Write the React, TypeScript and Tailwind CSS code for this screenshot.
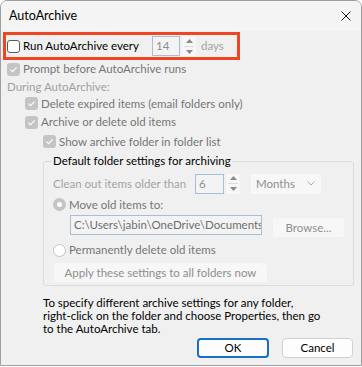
import { FC } from "react";

const font = { fontFamily: 'Lato, "Liberation Sans", sans-serif' };

const Check: FC<{ checked?: boolean; disabled?: boolean }> = ({ checked, disabled }) =>
    checked ? (
        <div className={`shrink-0 w-[13px] h-[13px] rounded-[3px] flex items-center justify-center ${disabled ? "bg-[#c4c4c4]" : "bg-[#005fb8]"}`}>
            <svg width="9" height="9" viewBox="0 0 9 9">
                <path d="M1.5 4.6 L3.6 6.6 L7.6 2.4" stroke="#fff" strokeWidth="1.1" fill="none" />
            </svg>
        </div>
    ) : (
        <div className="shrink-0 w-[13px] h-[13px] rounded-[3px] border border-[#5a5a5a] bg-white" />
    );

const Radio: FC<{ selected?: boolean }> = ({ selected }) =>
    selected ? (
        <div className="shrink-0 w-[13px] h-[13px] rounded-full bg-[#c4c4c4] flex items-center justify-center">
            <div className="w-[5px] h-[5px] rounded-full bg-white" />
        </div>
    ) : (
        <div className="shrink-0 w-[13px] h-[13px] rounded-full border border-[#c2c2c2] bg-white" />
    );

const Spin: FC<{ value: string; w: string }> = ({ value, w }) => (
    <div className="flex items-center shrink-0">
        <div className={`${w} h-[20px] border border-[#a9bdd4] bg-[#f3f3f3] flex items-center pl-[3px] text-[#8e8e8e]`}>{value}</div>
        <div className="ml-[2px] w-[14px] h-[20px] bg-[#f7f7f7] flex flex-col items-center justify-center gap-[3px]">
            <svg width="7" height="4" viewBox="0 0 7 4"><path d="M0 4 L3.5 0 L7 4Z" fill="#8a8a8a" /></svg>
            <div className="w-[10px] h-px bg-[#dcdcdc]" />
            <svg width="7" height="4" viewBox="0 0 7 4"><path d="M0 0 L3.5 4 L7 0Z" fill="#8a8a8a" /></svg>
        </div>
    </div>
);

export const App: FC = () => {
    return (
        <div style={font} className="w-[362px] h-[367px] bg-white text-[11.5px] leading-[16px] whitespace-nowrap">
            <div className="w-[362px] h-[366px] rounded-t-[7px] border border-[#9f9f9f] bg-[#f0f0f0] overflow-hidden flex flex-col">
                <div className="h-[30px] bg-[#f4f4f4] flex items-center justify-between pl-[8px] pr-[10px] shrink-0">
                    <span className="text-[12.5px] text-black">AutoArchive</span>
                    <svg width="10" height="10" viewBox="0 0 10 10">
                        <path d="M0.5 0.5 L9.5 9.5 M9.5 0.5 L0.5 9.5" stroke="#1a1a1a" strokeWidth="1" />
                    </svg>
                </div>

                <div className="ml-[2px] mt-[1px] w-[237px] h-[28px] border-[3px] border-[#ef4523] flex items-center pl-[1px] shrink-0">
                    <Check />
                    <span className="ml-[3px] w-[114px] shrink-0 text-black">Run AutoArchive every</span>
                    <div className="ml-[15px]"><Spin value="14" w="w-[28px]" /></div>
                    <span className="ml-[5px] text-[#a3a3a3]">days</span>
                </div>

                <div className="h-[18px] flex items-center pl-[6px] shrink-0">
                    <Check checked disabled />
                    <span className="ml-[3px] text-[#767676]">Prompt before AutoArchive runs</span>
                </div>
                <div className="h-[17px] flex items-center pl-[6px] text-[#a0a0a0] shrink-0">During AutoArchive:</div>
                <div className="h-[17px] flex items-center pl-[24px] shrink-0">
                    <Check checked disabled />
                    <span className="ml-[3px] text-[#767676]">Delete expired items (email folders only)</span>
                </div>
                <div className="h-[20px] flex items-center pl-[24px] shrink-0">
                    <Check checked disabled />
                    <span className="ml-[3px] text-[#767676]">Archive or delete old items</span>
                </div>
                <div className="h-[19px] flex items-center pl-[42px] shrink-0">
                    <Check checked disabled />
                    <span className="ml-[3px] text-[#767676]">Show archive folder in folder list</span>
                </div>

                <fieldset className="shrink-0 mt-[2px] ml-[42px] w-[311px] border border-[#dcdcdc] rounded-[3px] pl-[9px] pr-[8px] pb-[3px]">
                    <legend className="-ml-[1px] px-[1px] text-black">Default folder settings for archiving</legend>
                    <div className="mt-[4px] h-[21px] flex items-center">
                        <span className="w-[135px] shrink-0 text-[#a3a3a3]">Clean out items older than</span>
                        <div className="ml-[7px]"><Spin value="6" w="w-[29px]" /></div>
                        <div className="ml-[11px] w-[70px] h-[20px] bg-[#f7f7f7] flex items-center justify-between pl-[5px] pr-[6px] text-[#8e8e8e]">
                            <span>Months</span>
                            <svg width="8" height="5" viewBox="0 0 8 5"><path d="M0.5 0.5 L4 4 L7.5 0.5" stroke="#b0b0b0" fill="none" /></svg>
                        </div>
                    </div>
                    <div className="h-[21px] flex items-center">
                        <Radio selected />
                        <span className="ml-[3px] text-[#767676]">Move old items to:</span>
                    </div>
                    <div className="h-[24px] flex items-start pl-[17px]">
                        <div className="w-[192px] h-[20px] border border-[#a9bdd4] bg-[#f3f3f3] flex items-center pl-[3px] text-[#6e6e6e] overflow-hidden">C:\Users\jabin\OneDrive\Documents</div>
                        <div className="ml-[11px] mt-[3px] w-[71px] h-[19px] bg-[#f7f7f7] rounded-[3px] flex items-center justify-center text-[#8e8e8e]">Browse...</div>
                    </div>
                    <div className="h-[22px] flex items-center">
                        <Radio />
                        <span className="ml-[3px] text-[#767676]">Permanently delete old items</span>
                    </div>
                    <div className="mt-[2px] h-[19px] w-[213px] ml-[1px] bg-[#f7f7f7] rounded-[3px] flex items-center justify-center text-[#8e8e8e]">Apply these settings to all folders now</div>
                </fieldset>

                <div className="shrink-0 mt-[10px] pl-[42px] leading-[13px] text-black">
                    <p>To specify different archive settings for any folder,</p>
                    <p>right-click on the folder and choose Properties, then go</p>
                    <p>to the AutoArchive tab.</p>
                </div>

                <div className="shrink-0 mt-[3px] flex justify-end pr-[8px] gap-[13px]">
                    <button className="w-[72px] h-[20px] rounded-[4px] border-2 border-[#1a6fc4] bg-[#fdfdfd] text-black flex items-center justify-center">OK</button>
                    <button className="w-[71px] h-[20px] rounded-[4px] border border-[#d0d0d0] bg-[#fdfdfd] text-black flex items-center justify-center">Cancel</button>
                </div>
            </div>
        </div>
    );
};

export default App;
